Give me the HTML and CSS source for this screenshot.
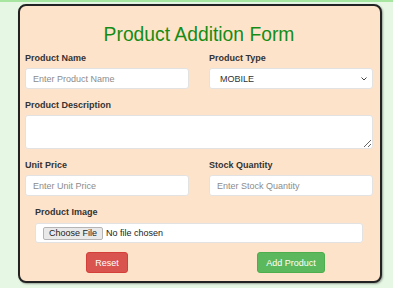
FILE: index.html
```html
<!DOCTYPE html>
<html lang="en">
  <head>
    <meta charset="UTF-8" />
    <meta name="viewport" content="width=device-width, initial-scale=1.0" />
    <title>Product Addition Form</title>
    <link rel="stylesheet" href="styles.css">
  </head>
  <body>
    <!-- Product form card -->
    <form class="card">
      <h1 class="title">Product Addition Form</h1>

      <div class="grid">
        <div class="field">
          <label for="name">Product Name</label>
          <input id="name" type="text" placeholder="Enter Product Name" />
        </div>
        <div class="field">
          <label for="type">Product Type</label>
          <select id="type">
            <option>MOBILE</option>
            <option>LAPTOP</option>
            <option>TABLET</option>
          </select>
        </div>

        <div class="field wide">
          <label for="desc">Product Description</label>
          <textarea id="desc"></textarea>
        </div>

        <div class="field">
          <label for="price">Unit Price</label>
          <input id="price" type="text" placeholder="Enter Unit Price" />
        </div>
        <div class="field">
          <label for="qty">Stock Quantity</label>
          <input id="qty" type="text" placeholder="Enter Stock Quantity" />
        </div>

        <div class="field wide image">
          <label for="img">Product Image</label>
          <div class="file-box">
            <input id="img" type="file" />
          </div>
        </div>

        <div class="actions">
          <button type="reset" class="btn btn-reset">Reset</button>
        </div>
        <div class="actions">
          <button type="submit" class="btn btn-add">Add Product</button>
        </div>
      </div>
    </form>
  </body>
</html>
```
FILE: styles.css
```css
body {
  margin: 0;
  padding: 4px 0 0 18px;
  background: #e6f8e4;
  border-top: 2px solid #a6e6a0;
  font-family: "Liberation Sans", Arial, sans-serif;
  height: 288px;
  box-sizing: border-box;
}

.card {
  box-sizing: border-box;
  width: 364px;
  height: 279px;
  margin-top: -2px;
  padding: 18px 7px 0 5px;
  background: #fee3cb;
  border: 2px solid #222;
  border-radius: 8px;
  box-shadow: 1px 1px 2px rgba(0, 0, 0, 0.35);
}

.title {
  margin: 0 0 7px;
  font-size: 19.3px;
  line-height: 22px;
  font-weight: normal;
  text-align: center;
  color: #158c15;
}

.grid {
  display: grid;
  grid-template-columns: 164px 164px;
  column-gap: 20px;
  row-gap: 11px;
}

.field label {
  display: block;
  margin-bottom: 4px;
  font-size: 9px;
  line-height: 11px;
  font-weight: bold;
  color: #333;
}

.wide {
  grid-column: 1 / 3;
}

.image {
  margin: 0 10px;
}

.image label {
  margin-bottom: 5px;
}

input[type="text"],
select,
textarea {
  display: block;
  box-sizing: border-box;
  width: 100%;
  height: 21px;
  margin: 0;
  padding: 0 7px;
  background: #fff;
  border: 1px solid #e2e2e2;
  border-radius: 3px;
  font-family: inherit;
  font-size: 9px;
  color: #333;
}

input::placeholder {
  color: #8c8c8c;
}

select {
  appearance: none;
  padding: 0 4px 0 10px;
  background: #fff url("data:image/svg+xml,%3Csvg xmlns='http://www.w3.org/2000/svg' width='6' height='4' viewBox='0 0 6 4'%3E%3Cpath d='M0.5 0.5L3 3L5.5 0.5' fill='none' stroke='%23444' stroke-width='1'/%3E%3C/svg%3E") no-repeat right 5px center;
}

textarea {
  height: 34px;
  resize: vertical;
}

.file-box {
  box-sizing: border-box;
  display: flex;
  align-items: center;
  height: 20px;
  padding: 0 7px;
  background: #fff;
  border: 1px solid #e2e2e2;
  border-radius: 3px;
}

.file-box input {
  height: 13px;
  font-family: inherit;
  font-size: 9px;
  line-height: 13px;
  color: #222;
}

.file-box input::file-selector-button {
  box-sizing: border-box;
  height: 13px;
  margin-right: 3px;
  padding: 0 5px;
  font-family: inherit;
  font-size: 9px;
  line-height: 11px;
  color: #222;
  background: #e9e9e9;
  border: 1px solid #b5b5b5;
  border-radius: 2px;
}

.actions {
  display: flex;
  justify-content: center;
  margin-top: -2px;
}

.btn {
  height: 21px;
  padding: 0 8px;
  font-family: inherit;
  font-size: 9px;
  color: #fff;
  border-radius: 3px;
}

.btn-reset {
  background: #d9534f;
  border: 1px solid #d43f3a;
}

.btn-add {
  background: #5cb85c;
  border: 1px solid #4cae4c;
}
```
